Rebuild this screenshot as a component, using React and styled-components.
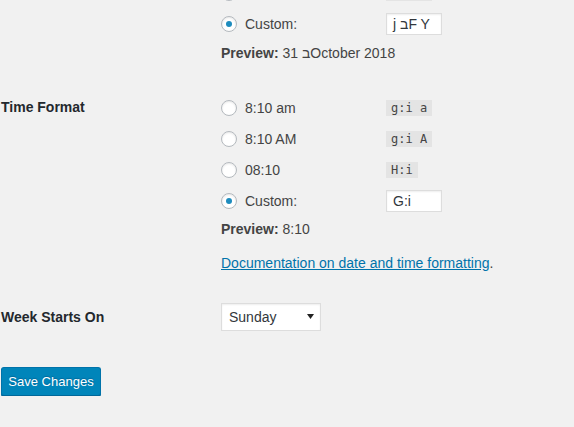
import styled, { createGlobalStyle } from "styled-components";

const GlobalStyle = createGlobalStyle`
  body {
    margin: 0;
    background: #f1f1f1;
    font-family: "Liberation Sans", Arial, sans-serif;
    font-size: 14px;
    color: #444;
  }
`;

const Page = styled.div`
  margin-top: -23px;
  padding-left: 1px;
`;

const Section = styled.div`
  display: grid;
  grid-template-columns: 220px 1fr;
  padding-bottom: ${(p) => p.$gap}px;
`;

const RowLabel = styled.div`
  font-weight: 700;
  color: #23282d;
  height: ${(p) => p.$h}px;
  line-height: ${(p) => p.$h}px;
`;

const Options = styled.div`
  display: flex;
  flex-direction: column;
`;

const Option = styled.label`
  display: flex;
  align-items: center;
  height: 31px;
`;

const Choice = styled.span`
  display: flex;
  align-items: center;
  gap: 8px;
  width: 165px;
`;

const Radio = styled.span`
  box-sizing: border-box;
  width: 16px;
  height: 16px;
  border-radius: 50%;
  border: 1px solid #b4b9be;
  background: #fff;
  box-shadow: inset 0 1px 2px rgba(0, 0, 0, 0.1);
  display: flex;
  align-items: center;
  justify-content: center;

  &::after {
    content: "";
    display: ${(p) => (p.$checked ? "block" : "none")};
    width: 6px;
    height: 6px;
    border-radius: 50%;
    background: #1e8cbe;
  }
`;

const Code = styled.code`
  box-sizing: border-box;
  display: inline-block;
  min-width: ${(p) => p.$w || 0}px;
  background: #e4e4e4;
  font-family: "DejaVu Sans Mono", "Liberation Mono", monospace;
  font-size: 12px;
  color: #444;
  height: 16px;
  line-height: 16px;
  padding: 0 5px;
`;

const TextInput = styled.span`
  box-sizing: border-box;
  display: inline-block;
  width: 56px;
  height: 22px;
  line-height: 20px;
  padding: 0 6px;
  background: #fff;
  border: 1px solid #ddd;
  box-shadow: inset 0 1px 2px rgba(0, 0, 0, 0.07);
  color: #32373c;
`;

const Preview = styled.p`
  margin: ${(p) => p.$top}px 0 0;
  height: 20px;
  line-height: 20px;

  strong {
    font-weight: 700;
    color: #444;
  }
`;

const DocLine = styled.p`
  margin: 14px 0 0;
  height: 20px;
  line-height: 20px;

  a {
    color: #0073aa;
    text-decoration: underline;
  }
`;

const SelectWrap = styled.div`
  position: relative;
  width: 100px;
`;

const Select = styled.select`
  box-sizing: border-box;
  appearance: none;
  width: 100px;
  height: 28px;
  padding: 0 7px;
  border: 1px solid #ddd;
  border-radius: 0;
  background: #fff;
  box-shadow: inset 0 1px 2px rgba(0, 0, 0, 0.07);
  font-family: inherit;
  font-size: 14px;
  color: #32373c;
`;

const Arrow = styled.svg`
  position: absolute;
  right: 7px;
  top: 11px;
  pointer-events: none;
`;

const SaveButton = styled.button`
  box-sizing: border-box;
  height: 29px;
  width: 100px;
  padding: 0 0 1px;
  white-space: nowrap;
  background: #0085ba;
  border: 1px solid #0073aa;
  border-bottom-color: #006799;
  border-radius: 3px;
  box-shadow: 0 1px 0 #006799;
  color: #fff;
  font-family: inherit;
  font-size: 13px;
  text-shadow: 0 -1px 1px #006799;
`;

function RadioRow({ label, checked, children }) {
  return (
    <Option>
      <Choice>
        <Radio $checked={checked} />
        {label}
      </Choice>
      {children}
    </Option>
  );
}

export default function App() {
  return (
    <>
      <GlobalStyle />
      <Page>
        <Section $gap={29}>
          <div />
          <Options>
            {/* row scrolled above the viewport; only its lower edge shows */}
            <RadioRow label="">
              <Code $w={46} />
            </RadioRow>
            <RadioRow label="Custom:" checked>
              <TextInput>j בF Y</TextInput>
            </RadioRow>
            <Preview $top={4}>
              <strong>Preview:</strong> 31 בOctober 2018
            </Preview>
          </Options>
        </Section>

        <Section $gap={30}>
          <RowLabel $h={31}>Time Format</RowLabel>
          <Options>
            <RadioRow label="8:10 am">
              <Code>g:i a</Code>
            </RadioRow>
            <RadioRow label="8:10 AM">
              <Code>g:i A</Code>
            </RadioRow>
            <RadioRow label="08:10">
              <Code>H:i</Code>
            </RadioRow>
            <RadioRow label="Custom:" checked>
              <TextInput>G:i</TextInput>
            </RadioRow>
            <Preview $top={3}>
              <strong>Preview:</strong> 8:10
            </Preview>
            <DocLine>
              <a href="#">Documentation on date and time formatting</a>.
            </DocLine>
          </Options>
        </Section>

        <Section $gap={36}>
          <RowLabel $h={28}>Week Starts On</RowLabel>
          <SelectWrap>
            <Select defaultValue="0">
              <option value="0">Sunday</option>
              <option value="1">Monday</option>
            </Select>
            <Arrow width="7" height="5" viewBox="0 0 7 5">
              <path d="M0 0h7L3.5 5z" fill="#222" />
            </Arrow>
          </SelectWrap>
        </Section>

        <SaveButton>Save Changes</SaveButton>
      </Page>
    </>
  );
}
